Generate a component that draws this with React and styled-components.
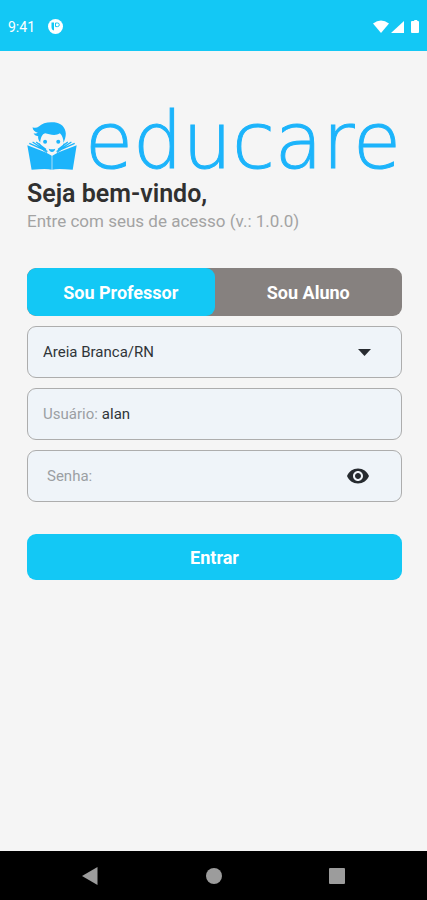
import { useState } from "react";
import styled, { createGlobalStyle } from "styled-components";

const GlobalStyle = createGlobalStyle`
  * {
    box-sizing: border-box;
  }
  body {
    margin: 0;
    background: #f5f5f5;
    font-family: Roboto, "Liberation Sans", sans-serif;
  }
  button, input, select {
    font-family: inherit;
  }
`;

const Screen = styled.div`
  min-height: 100vh;
  display: flex;
  flex-direction: column;
`;
const StatusBar = styled.header`
  height: 51px;
  display: flex;
  align-items: center;
  justify-content: space-between;
  padding: 2px 7px 0 8px;
  background: #13c8f5;
  color: #ffffff;
  font-size: 14px;
`;
const StatusGroup = styled.div`
  display: flex;
  align-items: center;
  gap: ${(props) => props.$gap}px;
`;
const Content = styled.main`
  flex: 1;
  padding: 68px 25px 32px 27px;
`;
const Logo = styled.div`
  display: flex;
  align-items: flex-start;
  gap: 8px;
  height: 52px;
  color: #1cb4fb;

  svg {
    align-self: flex-end;
  }
`;
const Wordmark = styled.span`
  font-family: "DejaVu Sans", sans-serif;
  font-size: 78px;
  font-weight: 200;
  line-height: 44px;
  -webkit-text-stroke: 1px #1cb4fb;
`;
const Title = styled.h1`
  margin: 8px 0 0;
  font-size: 25px;
  line-height: 30px;
  font-weight: 600;
  color: #303030;
`;
const Subtitle = styled.p`
  margin: 1px 0 0;
  font-size: 17px;
  line-height: 22px;
  color: #a3a3a3;
`;
const Form = styled.form`
  margin-top: 36px;
  display: flex;
  flex-direction: column;
  gap: 10px;
`;
const Tabs = styled.div`
  display: flex;
  height: 48px;
  border-radius: 9px;
  background: #86817f;
  overflow: hidden;
`;
const Tab = styled.button`
  flex: 1;
  border: none;
  border-radius: 9px;
  background: ${(props) => (props.$active ? "#13c8f5" : "transparent")};
  color: #ffffff;
  font-size: 18px;
  font-weight: 700;
  cursor: pointer;
`;
const Field = styled.div`
  display: flex;
  align-items: center;
  gap: 4px;
  height: 52px;
  padding: 0 32px 0 ${(props) => props.$left || 15}px;
  border: 1px solid #adadad;
  border-radius: 9px;
  background: #eff4f9;
`;
const Label = styled.label`
  font-size: 15px;
  color: #9b9fa3;
`;
const Input = styled.input`
  flex: 1;
  min-width: 0;
  padding: 0;
  border: none;
  outline: none;
  background: transparent;
  font-size: 15px;
  color: #303438;
`;
const SelectField = styled.div`
  display: grid;
  align-items: center;
  height: 52px;
  border: 1px solid #adadad;
  border-radius: 9px;
  background: #eff4f9;

  & > * {
    grid-area: 1 / 1;
  }
  svg {
    justify-self: end;
    margin-right: 30px;
    pointer-events: none;
  }
`;
const Select = styled.select`
  width: 100%;
  height: 100%;
  padding: 0 60px 0 15px;
  border: none;
  outline: none;
  appearance: none;
  background: transparent;
  font-size: 15px;
  color: #303438;
`;
const IconButton = styled.button`
  display: flex;
  padding: 0;
  border: none;
  background: transparent;
  color: #272b30;
  cursor: pointer;
`;
const SubmitButton = styled.button`
  height: 46px;
  margin-top: 22px;
  border: none;
  border-radius: 9px;
  background: #13c8f5;
  color: #ffffff;
  font-size: 18px;
  font-weight: 700;
  cursor: pointer;
`;
const NavBar = styled.nav`
  display: flex;
  height: 49px;
  padding: 0 28px;
  background: #000000;
`;
const NavButton = styled.button`
  flex: 1;
  display: flex;
  align-items: center;
  justify-content: center;
  padding: 0;
  border: none;
  background: transparent;
  color: #9c9c9c;
  cursor: pointer;
`;

function ReaderIcon() {
  return (
    <svg width="50" height="50" viewBox="20 35 152 148" fill="currentColor" aria-hidden="true">
      {/* hair */}
      <path d="M37 52 C44 55 50 54 56 50 C66 39 84 35 103 37 C124 39 137 53 138 71 C138 82 135 90 131 99 C131 88 128 78 120 70 C106 80 88 73 75 70 C66 73 62 82 60 98 C55 91 53 85 54 79 C46 78 42 75 40 70 C46 72 50 71 53 69 C44 66 37 61 37 52Z" />
      {/* face */}
      <circle cx="75" cy="96" r="6" />
      <circle cx="115" cy="96" r="6" />
      <path d="M86 117 Q96 121 106 117 Q103 127 96 127 Q89 127 86 117Z" />
      <path d="M58 101 Q64 122 81 129 M133 101 Q127 122 111 129" fill="none" stroke="currentColor" strokeWidth="3" />
      {/* book */}
      <path d="M21 107 L66 124 Q86 131 95 139 L95 181 Q82 177 34 181Z" />
      <path d="M171 107 L126 124 Q106 131 97 139 L97 181 Q110 177 159 181Z" />
      <path d="M27 101 L78 124 M37 97 L82 126 M48 97 L78 120 M165 101 L114 124 M155 97 L110 126 M144 97 L114 120" fill="none" stroke="currentColor" strokeWidth="4" />
    </svg>
  );
}

export default function App() {
  const [role, setRole] = useState("professor");
  const [city, setCity] = useState("Areia Branca/RN");
  const [user, setUser] = useState("alan");
  const [password, setPassword] = useState("");
  const [visible, setVisible] = useState(false);

  return (
    <Screen>
      <GlobalStyle />
      <StatusBar>
        <StatusGroup $gap={13}>
          <span>9:41</span>
          <svg width="15" height="15" viewBox="0 0 15 15" aria-hidden="true">
            <circle cx="7.5" cy="7.5" r="7.5" fill="#fff" />
            <path d="M3.5 3.5H6V11.5Q3.5 11 3.5 8Z" fill="#13c8f5" />
            <path d="M7.5 4H9.5A1.8 1.8 0 0 1 9.5 7.6H7.5Z" fill="none" stroke="#13c8f5" />
          </svg>
        </StatusGroup>
        <StatusGroup $gap={2}>
          <svg width="16" height="14" viewBox="0 0 16 14" fill="#fff" aria-hidden="true">
            <path d="M0 3.5 Q8 -2.5 16 3.5 L8 13Z" />
          </svg>
          <svg width="13" height="14" viewBox="0 0 13 14" fill="#fff" aria-hidden="true">
            <path d="M13 1V13H0Z" />
          </svg>
          <svg width="14" height="14" viewBox="0 0 14 14" fill="#fff" aria-hidden="true">
            <path d="M6 1H8L8.5 0H11L11.5 1H12Q13 1 13 2V12Q13 13 12 13H6Q5 13 5 12V2Q5 1 6 1Z" />
          </svg>
        </StatusGroup>
      </StatusBar>

      <Content>
        <Logo>
          <ReaderIcon />
          <Wordmark>educare</Wordmark>
        </Logo>
        <Title>Seja bem-vindo,</Title>
        <Subtitle>Entre com seus de acesso (v.: 1.0.0)</Subtitle>

        <Form onSubmit={(e) => e.preventDefault()}>
          <Tabs>
            <Tab type="button" $active={role === "professor"} aria-pressed={role === "professor"} onClick={() => setRole("professor")}>
              Sou Professor
            </Tab>
            <Tab type="button" $active={role === "aluno"} aria-pressed={role === "aluno"} onClick={() => setRole("aluno")}>
              Sou Aluno
            </Tab>
          </Tabs>
          <SelectField>
            <Select aria-label="Município" value={city} onChange={(e) => setCity(e.target.value)}>
              <option>Areia Branca/RN</option>
            </Select>
            <svg width="13" height="7" viewBox="0 0 13 7" fill="#272b30" aria-hidden="true">
              <path d="M0 0H13L6.5 7Z" />
            </svg>
          </SelectField>
          <Field>
            <Label htmlFor="usuario">Usuário:</Label>
            <Input id="usuario" value={user} onChange={(e) => setUser(e.target.value)} />
          </Field>
          <Field $left={19}>
            <Label htmlFor="senha">Senha:</Label>
            <Input id="senha" type={visible ? "text" : "password"} value={password} onChange={(e) => setPassword(e.target.value)} />
            <IconButton type="button" aria-label="Mostrar senha" onClick={() => setVisible(!visible)}>
              <svg width="22" height="16" viewBox="1 4 22 16" fill="currentColor" aria-hidden="true">
                <path d="M12 4.5C7 4.5 2.73 7.61 1 12c1.73 4.39 6 7.5 11 7.5s9.27-3.11 11-7.5c-1.73-4.39-6-7.5-11-7.5zM12 17c-2.76 0-5-2.24-5-5s2.24-5 5-5 5 2.24 5 5-2.24 5-5 5zm0-8c-1.66 0-3 1.34-3 3s1.34 3 3 3 3-1.34 3-3-1.34-3-3-3z" />
              </svg>
            </IconButton>
          </Field>
          <SubmitButton type="submit">Entrar</SubmitButton>
        </Form>
      </Content>

      <NavBar>
        <NavButton aria-label="Voltar">
          <svg width="16" height="18" viewBox="0 0 16 18" fill="currentColor">
            <path d="M0 9L15.5 0V18Z" />
          </svg>
        </NavButton>
        <NavButton aria-label="Início">
          <svg width="16" height="16" viewBox="0 0 16 16" fill="currentColor">
            <circle cx="8" cy="8" r="8" />
          </svg>
        </NavButton>
        <NavButton aria-label="Recentes">
          <svg width="16" height="16" viewBox="0 0 16 16" fill="currentColor">
            <rect width="16" height="16" rx="1" />
          </svg>
        </NavButton>
      </NavBar>
    </Screen>
  );
}
